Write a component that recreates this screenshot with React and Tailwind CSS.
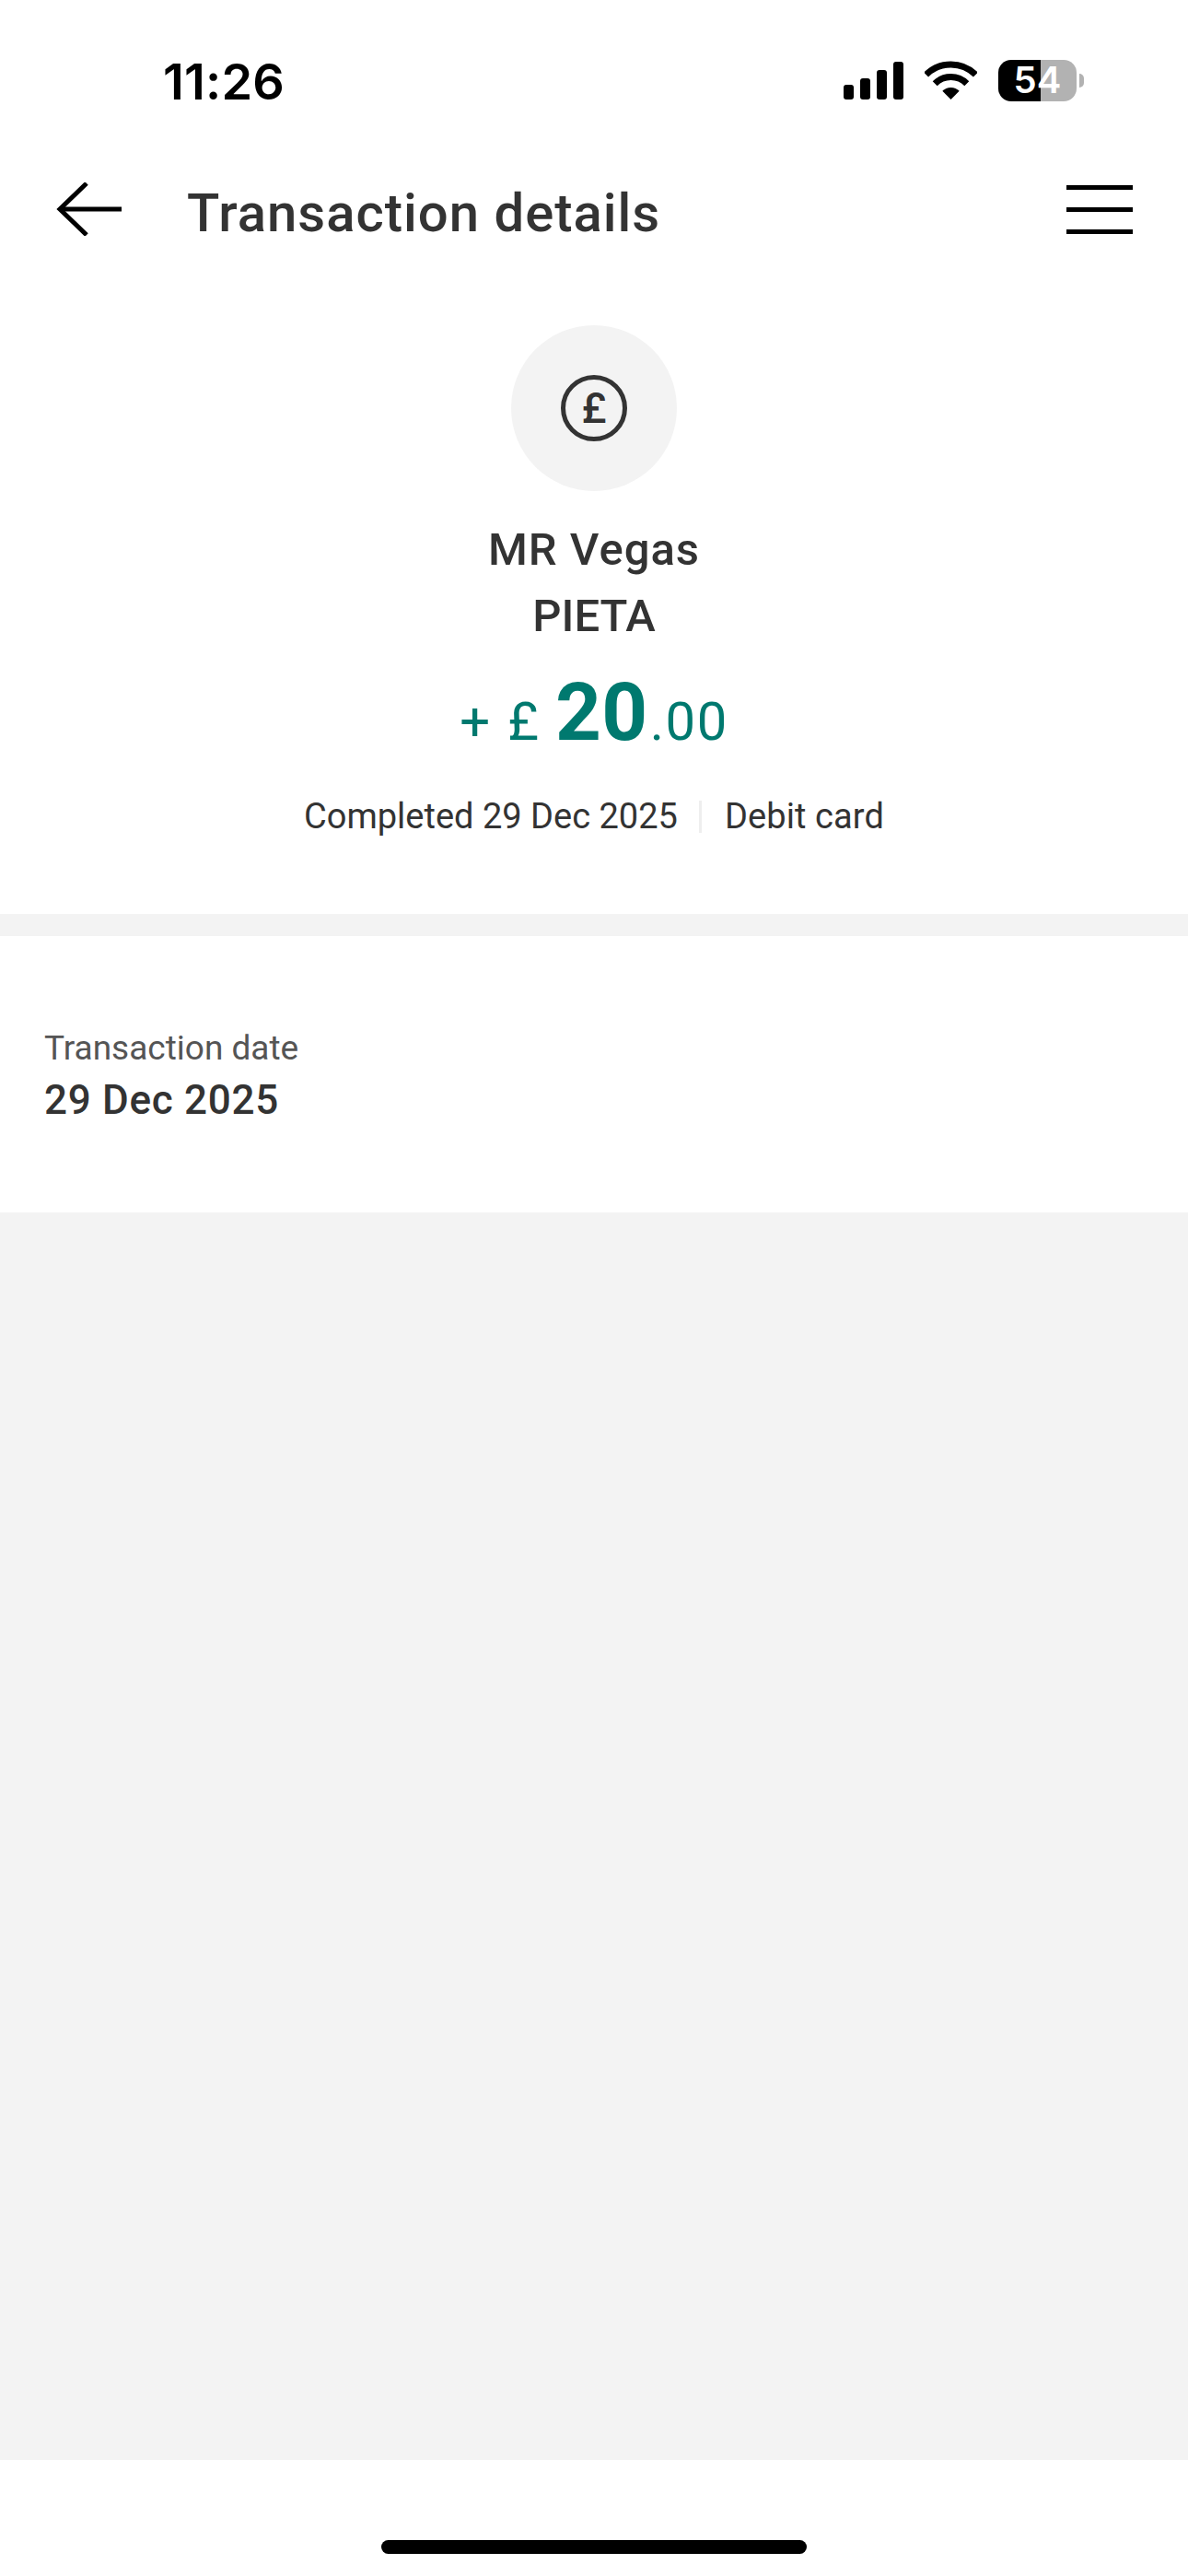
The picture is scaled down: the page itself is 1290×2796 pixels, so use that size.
import React from 'react'

const SIGNAL_BARS = ['h-[16px]', 'h-[23px]', 'h-[32px]', 'h-[41px]']

function StatusBar () {
  return (
    <div className="h-[174px] flex items-center justify-between pl-[177px] pr-[113px]">
      <span className="mt-[3px] font-['Inter',sans-serif] text-[54px] leading-[60px] font-semibold text-black tracking-[0.2px]">11:26</span>
      <div className="flex items-center">
        <div className="flex items-end gap-[7px] h-[41px]">
          {SIGNAL_BARS.map((h) => (
            <div key={h} className={`w-[11px] rounded-[3px] bg-black ${h}`} />
          ))}
        </div>
        <svg width="57" height="42" viewBox="0 0 57 42" className="ml-[23px] mr-[23px]">
          <path d="M1.6 15.1 A38 38 0 0 1 55.4 15.1" fill="none" stroke="#000" strokeWidth="7" />
          <path d="M11.2 24.7 A24.5 24.5 0 0 1 45.8 24.7" fill="none" stroke="#000" strokeWidth="7" />
          <path d="M28.5 42 L19.3 32.8 A13 13 0 0 1 37.7 32.8 Z" fill="#000" />
        </svg>
        <div className="relative w-[85px] h-[45px] flex">
          <div className="w-[46px] rounded-l-[14px] bg-black" />
          <div className="flex-1 rounded-r-[14px] bg-[#b2b2b2]" />
          <span className="absolute inset-0 flex items-center justify-center font-['Inter',sans-serif] text-[40px] leading-none font-semibold text-white">54</span>
        </div>
        <div className="w-[5px] h-[15px] ml-[3px] rounded-r-[5px] bg-[#b2b2b2]" />
      </div>
    </div>
  )
}

function NavBar () {
  return (
    <div className="h-[106px] flex items-center pl-[61px] pr-[60px]">
      <svg width="72" height="58" viewBox="0 0 72 58" className="shrink-0">
        <path d="M71 29 H4" fill="none" stroke="#000" strokeWidth="5" />
        <path d="M33 1 L4 29 L33 57" fill="none" stroke="#000" strokeWidth="5" />
      </svg>
      <h1 className="ml-[70px] mt-[8px] text-[58px] leading-[64px] font-medium text-[#333] tracking-[1px]">Transaction details</h1>
      <div className="ml-auto flex flex-col gap-[19px] w-[72px]">
        <div className="h-[5px] bg-black" />
        <div className="h-[5px] bg-black" />
        <div className="h-[5px] bg-black" />
      </div>
    </div>
  )
}

function Summary () {
  return (
    <div className="flex flex-col items-center pt-[73px] h-[712px] bg-white text-[#333]">
      <div className="w-[180px] h-[180px] rounded-full bg-[#f3f3f3] flex items-center justify-center">
        <div className="w-[72px] h-[72px] rounded-full border-[5px] border-[#333] flex items-center justify-center text-[46px] leading-none font-medium">£</div>
      </div>
      <p className="mt-[28px] text-[49px] leading-[72px] font-medium tracking-[1px]">MR Vegas</p>
      <p className="text-[49px] leading-[72px] font-medium">PIETA</p>
      <div className="mt-[18px] flex items-baseline text-[#00796f] leading-[100px]">
        <span className="text-[58px]">+</span>
        <span className="text-[58px] ml-[19px]">£</span>
        <span className="text-[87px] font-bold ml-[18px] tracking-[0.5px]">20</span>
        <span className="text-[58px] ml-[2px] tracking-[1.5px]">.00</span>
      </div>
      <div className="mt-[30px] flex items-center text-[38px] leading-[46px]">
        <span>Completed 29 Dec 2025</span>
        <div className="w-[3px] h-[35px] ml-[23px] mr-[25px] bg-[#eeeeee]" />
        <span className="tracking-[0.1px]">Debit card</span>
      </div>
    </div>
  )
}

export default function App () {
  return (
    <div className="w-[1290px] h-[2796px] flex flex-col bg-white font-['Roboto',sans-serif]">
      <StatusBar />
      <NavBar />
      <Summary />
      <div className="h-[24px] bg-[#f3f3f3]" />
      <div className="h-[300px] bg-white pt-[100px] pl-[48px]">
        <p className="text-[37px] leading-[44px] text-[#555]">Transaction date</p>
        <p className="mt-[8px] text-[44px] leading-[52px] font-medium text-[#333] tracking-[0.7px]">29 Dec 2025</p>
      </div>
      <div className="flex-1 bg-[#f3f3f3]" />
      <div className="h-[126px] bg-white flex justify-center pt-[87px]">
        <div className="w-[462px] h-[15px] rounded-full bg-black" />
      </div>
    </div>
  )
}
